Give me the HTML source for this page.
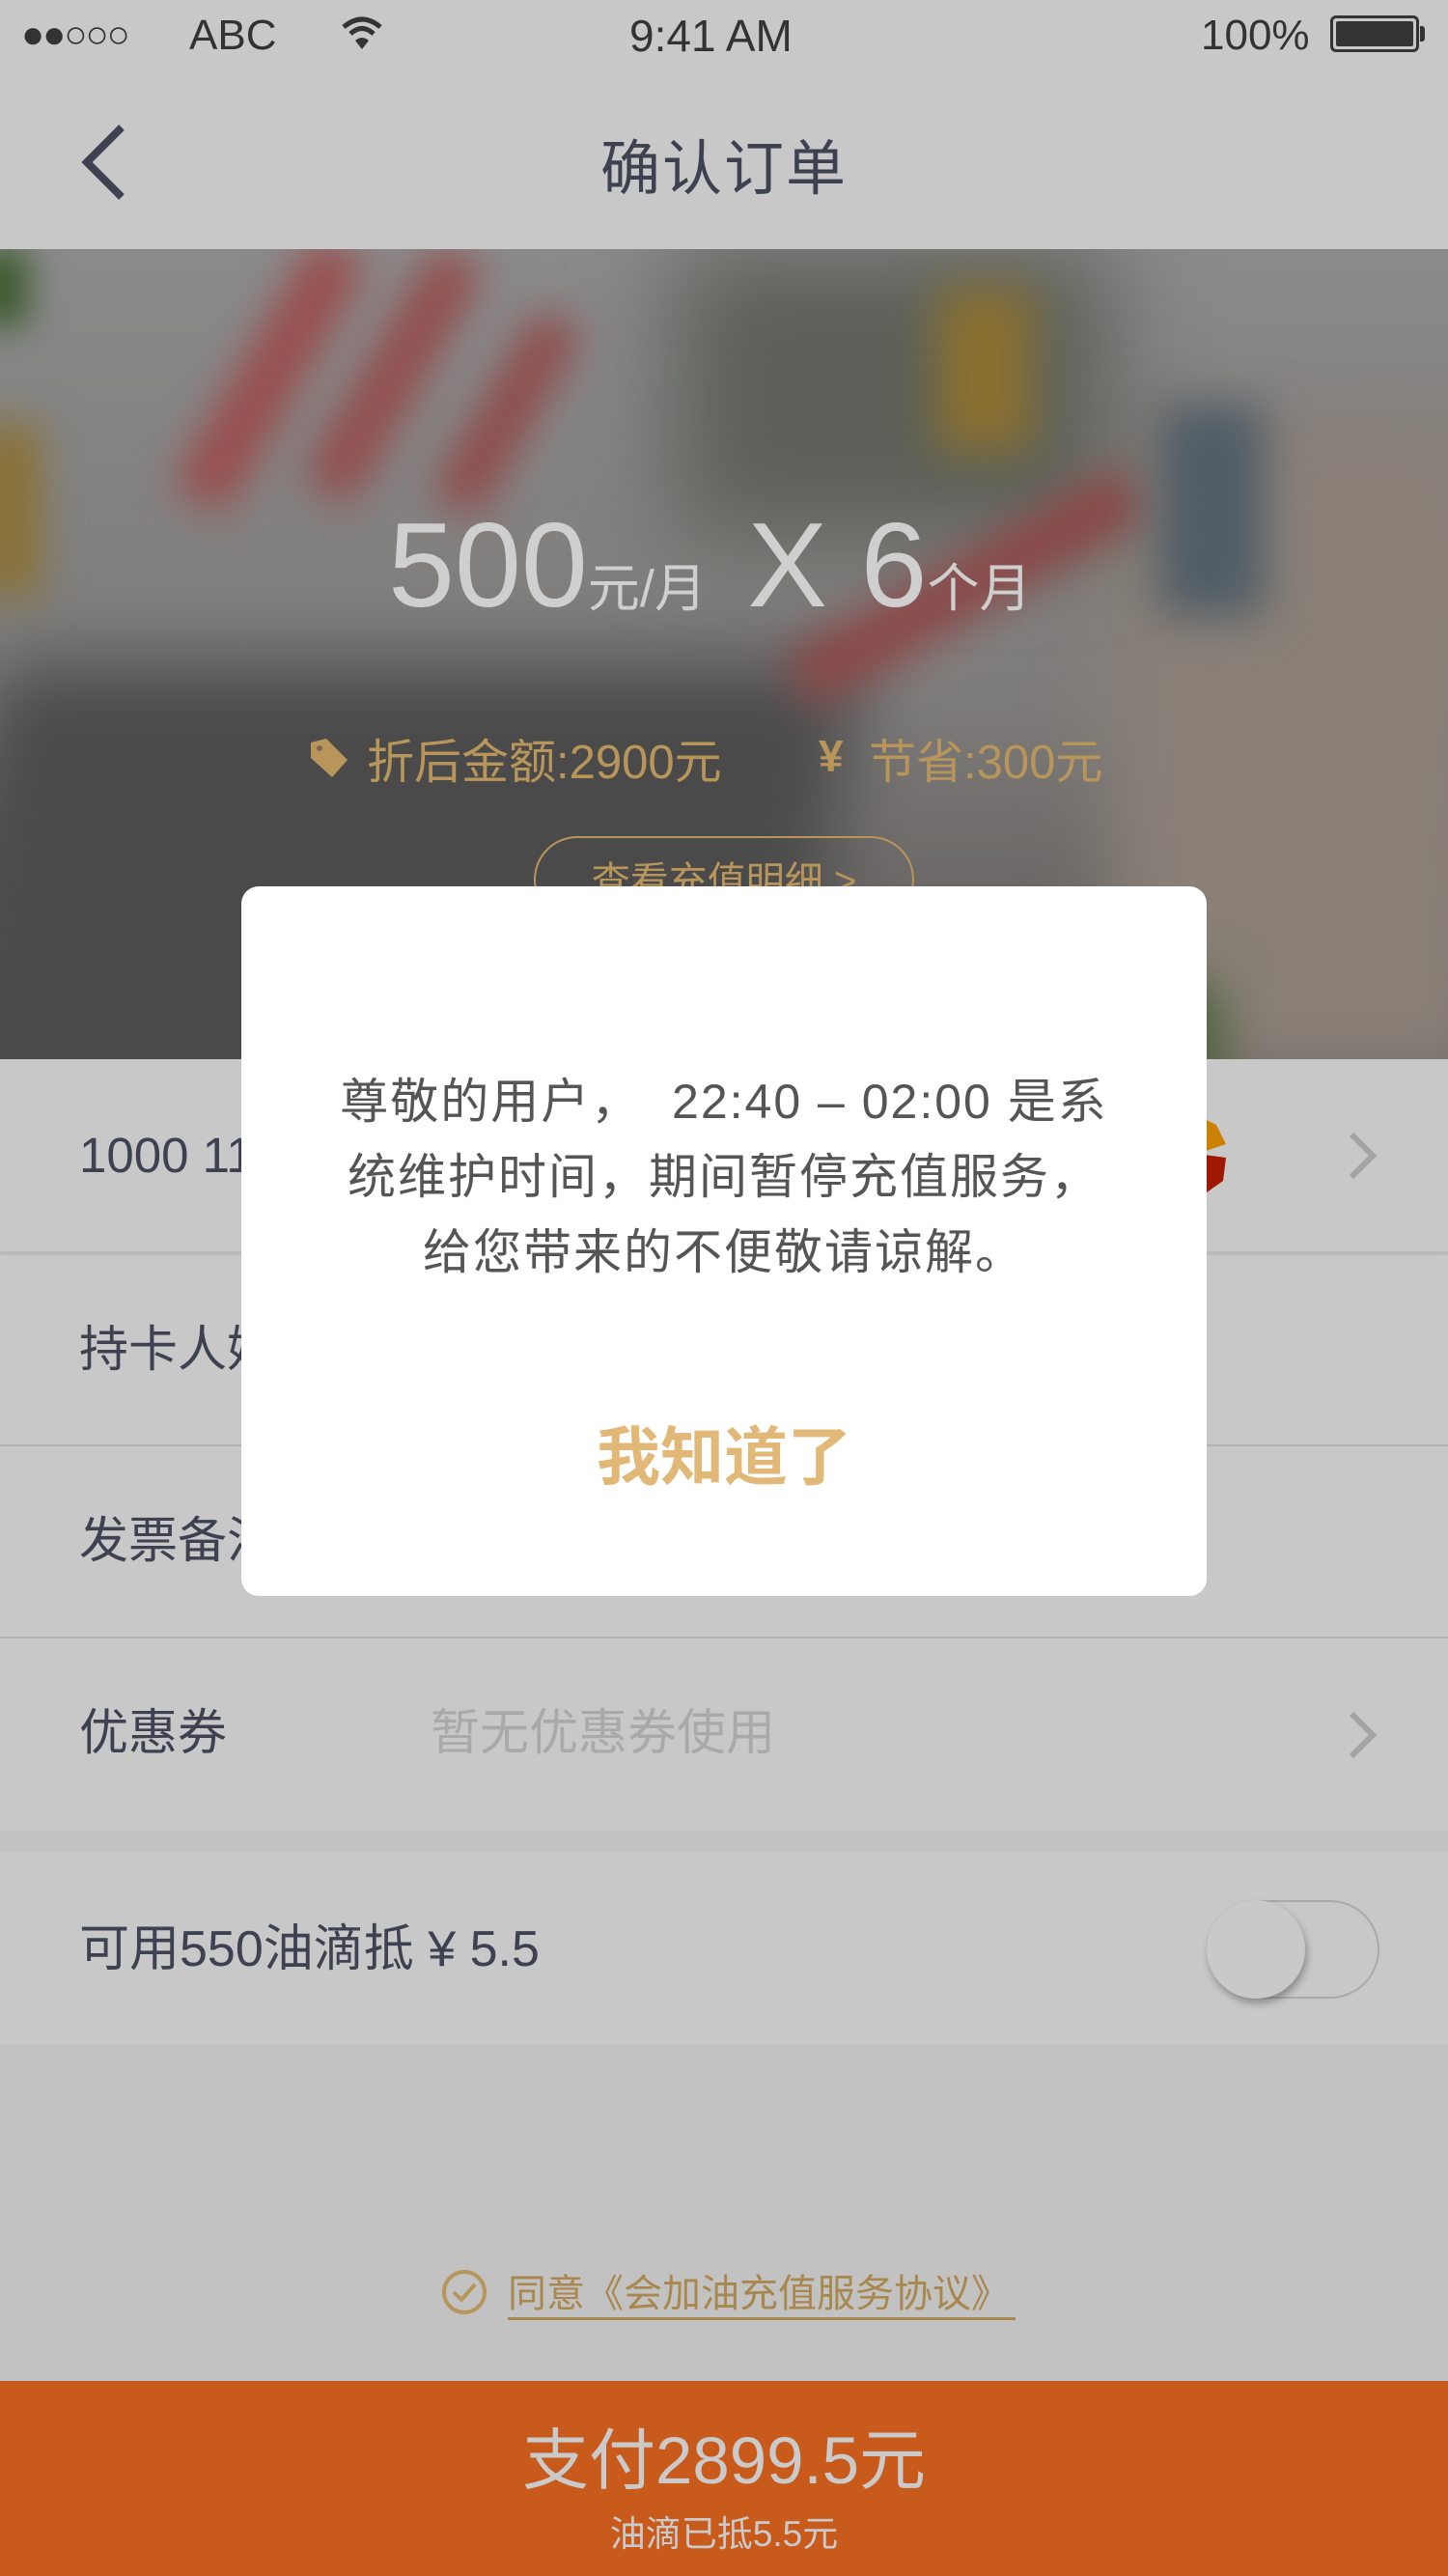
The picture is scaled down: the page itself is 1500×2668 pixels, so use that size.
<!DOCTYPE html>
<html><head><meta charset="utf-8"><style>
*{margin:0;padding:0;box-sizing:border-box}
body{width:1500px;height:2668px;position:relative;overflow:hidden;background:#c2c2c2;font-family:"Liberation Sans","Noto Sans CJK SC",sans-serif}
.a{position:absolute;white-space:nowrap}
.row{position:absolute;left:0;width:1500px;background:#c8c8c8}
.lbl{position:absolute;left:82px;font-size:51px;color:#3d4150;line-height:1}
.chev{position:absolute;left:1392px;width:40px;height:60px}
</style></head><body>
<!-- status + nav -->
<div class="a" style="left:0;top:0;width:1500px;height:258px;background:#c8c8c8"></div>
<div class="a" style="left:22px;top:14px;font-size:40px;color:#333;letter-spacing:-2px">●●○○○</div>
<div class="a" style="left:196px;top:12px;font-size:44px;color:#333">ABC</div>
<svg class="a" style="left:352px;top:14px" width="46" height="40" viewBox="0 0 46 40"><path d="M4 14 Q23 -2 42 14" stroke="#333" stroke-width="5" fill="none"/><path d="M11 21 Q23 10 35 21" stroke="#333" stroke-width="5" fill="none"/><path d="M16 28 L23 37 L30 28 Q23 22 16 28Z" fill="#333"/></svg>
<div class="a" style="left:652px;top:10px;font-size:46px;color:#333">9:41 AM</div>
<div class="a" style="left:1244px;top:12px;font-size:44px;color:#333">100%</div>
<div class="a" style="left:1378px;top:16px;width:92px;height:38px;border:3px solid #333;border-radius:6px;padding:3px"><div style="width:100%;height:100%;background:#333;border-radius:2px"></div></div>
<div class="a" style="left:1471px;top:27px;width:5px;height:16px;background:#333;border-radius:0 3px 3px 0"></div>
<svg class="a" style="left:76px;top:126px" width="60" height="84" viewBox="0 0 60 84"><path d="M50 6 L14 42 L50 78" stroke="#3d4150" stroke-width="8" fill="none"/></svg>
<div class="a" style="left:0;width:1500px;top:124px;text-align:center;font-size:62px;color:#3d4150;letter-spacing:2px">确认订单</div>

<!-- hero -->
<div class="a" style="left:0;top:258px;width:1500px;height:840px;overflow:hidden;background:linear-gradient(180deg,#8a8a8a 0%,#7e7c7a 55%,#5a5654 100%)">
 <div class="a" style="left:-60px;top:430px;width:900px;height:600px;background:#4a4a4a;filter:blur(40px);transform:skewX(-10deg)"></div>
 <div class="a" style="left:1150px;top:170px;width:400px;height:700px;background:#8a8078;filter:blur(40px)"></div>
 <div class="a" style="left:700px;top:0px;width:450px;height:300px;background:#5c6058;filter:blur(50px)"></div>
 <div class="a" style="left:250px;top:-20px;width:60px;height:300px;background:#9a4a4a;filter:blur(22px);transform:rotate(30deg)"></div>
 <div class="a" style="left:380px;top:-10px;width:55px;height:280px;background:#944848;filter:blur(22px);transform:rotate(30deg)"></div>
 <div class="a" style="left:500px;top:60px;width:50px;height:220px;background:#904545;filter:blur(22px);transform:rotate(30deg)"></div>
 <div class="a" style="left:800px;top:320px;width:400px;height:60px;background:#8c4646;filter:blur(22px);transform:rotate(-30deg)"></div>
 <div class="a" style="left:970px;top:40px;width:100px;height:170px;background:#8a7030;filter:blur(24px)"></div>
 <div class="a" style="left:-20px;top:180px;width:60px;height:180px;background:#8a7030;filter:blur(22px)"></div>
 <div class="a" style="left:1200px;top:160px;width:110px;height:220px;background:#4f5c66;filter:blur(24px)"></div>
 <div class="a" style="left:1080px;top:760px;width:180px;height:120px;background:#3e5a2e;filter:blur(30px)"></div>
 <div class="a" style="left:-30px;top:0;width:60px;height:80px;background:#3e5a2e;filter:blur(18px)"></div>
</div>
<div class="a" style="left:402px;top:524px;font-size:124px;color:#cfcfcf;line-height:1">500<span style="font-size:54px">元/月</span> <span style="margin-left:8px">X</span> 6<span style="font-size:54px">个月</span></div>
<svg class="a" style="left:318px;top:763px" width="46" height="46" viewBox="0 0 46 46"><path d="M4 6 L20 2 L42 24 L26 42 L4 22Z" fill="#b8955a"/><circle cx="13" cy="12" r="3" fill="#7a6a54"/></svg>
<div class="a" style="left:380px;top:750px;font-size:49px;color:#b8955a">折后金额:2900元</div>
<div class="a" style="left:848px;top:756px;font-size:46px;color:#b8955a;font-weight:bold">¥</div>
<div class="a" style="left:900px;top:750px;font-size:49px;color:#b8955a">节省:300元</div>
<div class="a" style="left:553px;top:866px;width:394px;height:90px;border:2px solid #b8955a;border-radius:45px;color:#b8955a;font-size:40px;text-align:center;padding-top:12px">查看充值明细 &gt;</div>

<!-- rows -->
<div class="row" style="top:1097px;height:199px;box-shadow:0 4px 6px rgba(0,0,0,.06)"><div class="lbl" style="top:74px">1000 1111 2222 3333</div>
<svg class="a" style="left:1230px;top:48px" width="60" height="104" viewBox="0 0 60 104"><path d="M10 10 L30 20 L40 40 L10 50Z" fill="#cc8200"/><path d="M10 50 L40 54 L37 78 L20 90 L10 96Z" fill="#a01800"/><path d="M10 0 L30 18" stroke="#c8c8c8" stroke-width="2"/></svg>
<svg class="chev" style="top:70px" viewBox="0 0 40 60"><path d="M8 8 L30 30 L8 52" stroke="#a3a3a3" stroke-width="6" fill="none"/></svg></div>
<div class="row" style="top:1300px;height:196px"><div class="lbl" style="top:72px">持卡人姓名</div></div>
<div class="a" style="left:0;top:1496px;width:1500px;height:2px;background:#b3b3b3"></div>
<div class="row" style="top:1498px;height:197px"><div class="lbl" style="top:72px">发票备注</div></div>
<div class="a" style="left:0;top:1695px;width:1500px;height:2px;background:#b3b3b3"></div>
<div class="row" style="top:1697px;height:199px"><div class="lbl" style="top:72px">优惠券</div><div class="lbl" style="left:446px;top:72px;color:#a9a9a9">暂无优惠券使用</div>
<svg class="chev" style="top:70px" viewBox="0 0 40 60"><path d="M8 8 L30 30 L8 52" stroke="#a3a3a3" stroke-width="6" fill="none"/></svg></div>
<div class="row" style="top:1918px;height:199px"><div class="lbl" style="top:75px;font-size:52px">可用550油滴抵 ¥ 5.5</div>
<div class="a" style="left:1250px;top:50px;width:179px;height:102px;border:2px solid #aaa;border-radius:51px"></div>
<div class="a" style="left:1250px;top:50px;width:102px;height:102px;background:#c9c9c9;border-radius:51px;box-shadow:2px 5px 8px rgba(0,0,0,.3)"></div></div>

<!-- agree -->
<svg class="a" style="left:456px;top:2349px" width="50" height="50" viewBox="0 0 50 50"><circle cx="25" cy="25" r="21" stroke="#b8955a" stroke-width="4" fill="none"/><path d="M14 25 L22 33 L36 17" stroke="#b8955a" stroke-width="4" fill="none"/></svg>
<div class="a" style="left:526px;top:2352px;font-size:40px;color:#a8884e;border-bottom:3px solid #a8884e;line-height:48px;padding-right:6px">同意《会加油充值服务协议》</div>

<!-- pay -->
<div class="a" style="left:0;top:2466px;width:1500px;height:202px;background:#c85a1c"></div>
<div class="a" style="left:0;width:1500px;top:2514px;text-align:center;font-size:69px;color:#cacaca;line-height:1">支付2899.5元</div>
<div class="a" style="left:0;width:1500px;top:2606px;text-align:center;font-size:37px;color:#cacaca;line-height:1">油滴已抵5.5元</div>

<!-- dialog -->
<div class="a" style="left:250px;top:918px;width:1000px;height:735px;background:#fff;border-radius:18px"></div>
<div class="a" style="left:250px;width:1000px;top:1102px;text-align:center;font-size:50px;line-height:78px;color:#555;letter-spacing:2px">尊敬的用户，&nbsp;&nbsp;22:40 – 02:00 是系<br>统维护时间，期间暂停充值服务，<br>给您带来的不便敬请谅解。</div>
<div class="a" style="left:250px;width:1000px;top:1476px;text-align:center;font-size:66px;color:#e1b877;font-weight:bold;line-height:1">我知道了</div>
</body></html>
